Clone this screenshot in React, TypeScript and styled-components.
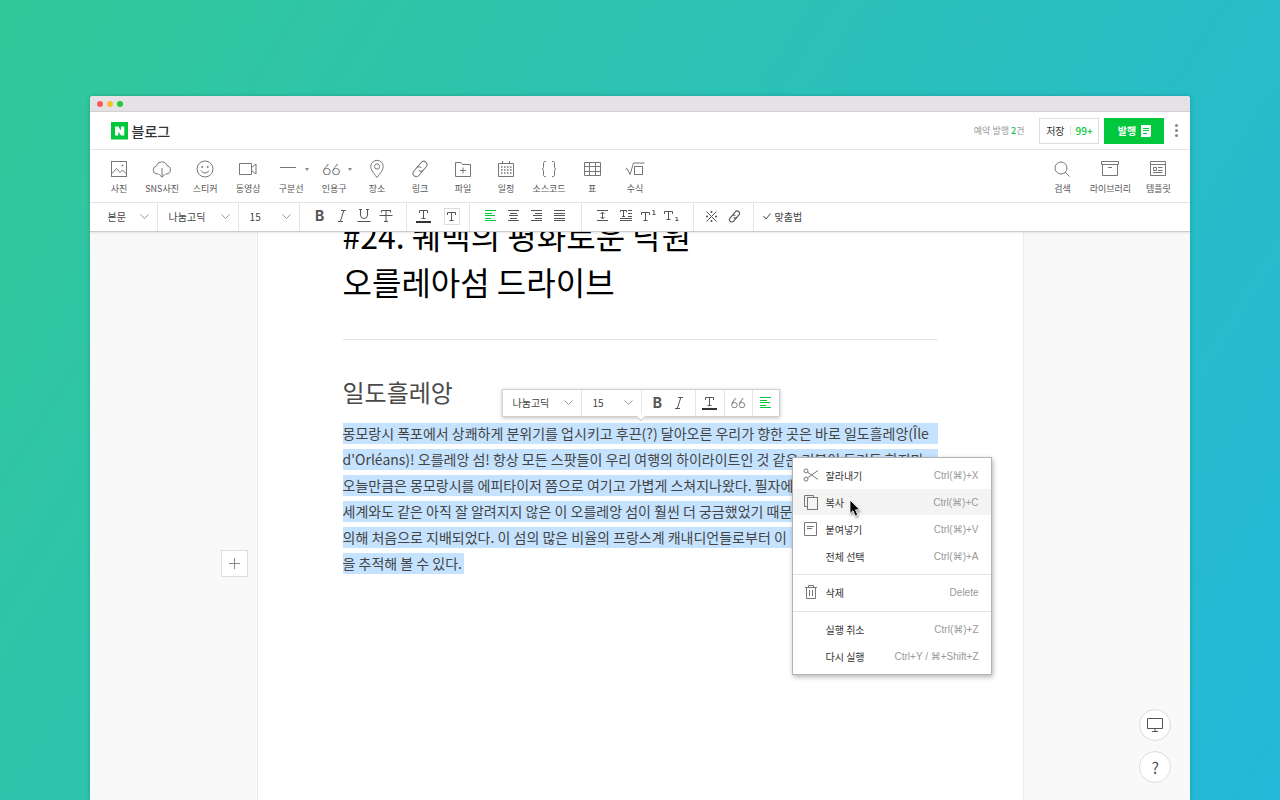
import React from "react";
import styled, { createGlobalStyle, css } from "styled-components";

const GREEN = "#00c73c";
const INK = "#555";
const LINE = "#e5e5e5";

const GlobalStyle = createGlobalStyle`
  *, *::before, *::after { box-sizing: border-box; }
  body {
    margin: 0;
    font-family: "Noto Sans CJK KR", "Noto Sans", sans-serif;
    font-size: 10px;
    color: ${INK};
  }
  button, select { font: inherit; color: inherit; }
  ul { list-style: none; margin: 0; padding: 0; }
`;

/* ---------- page frame ---------- */

const Desktop = styled.div`
  height: 100vh;
  display: flex;
  flex-direction: column;
  padding: 96px 7% 0;
  background: linear-gradient(122deg, #31c899 0%, #24b8da 100%);
  overflow: hidden;
`;

const Window = styled.div`
  position: relative;
  flex: 1;
  min-height: 0;
  display: flex;
  flex-direction: column;
  background: #fff;
  border-radius: 3px 3px 0 0;
  box-shadow: 0 0 4px rgba(0, 0, 0, 0.2);
  overflow: hidden;
`;

const TitleBar = styled.div`
  display: flex;
  align-items: center;
  gap: 4px;
  height: 16px;
  padding: 0 7px;
  background: #e5e2e6;
  border-bottom: 1px solid #d2d0d3;
`;

const Light = styled.span<{ $color: string }>`
  width: 6px;
  height: 6px;
  border-radius: 50%;
  background: ${(p) => p.$color};
`;

/* ---------- header ---------- */

const Header = styled.header`
  display: flex;
  align-items: center;
  justify-content: space-between;
  height: 38px;
  padding: 0 7px 0 21px;
  border-bottom: 1px solid ${LINE};
`;

const Brand = styled.a`
  display: flex;
  align-items: center;
  gap: 3px;
  color: #333;
  font-size: 14px;
  line-height: 18px;
  font-weight: 500;
  text-decoration: none;
`;

const HeaderActions = styled.div`
  display: flex;
  align-items: center;
`;

const Reserved = styled.span`
  margin-right: 15px;
  font-size: 9px;
  color: #999;
  b { color: ${GREEN}; font-weight: 500; }
`;

const HeaderButton = styled.button<{ $primary?: boolean }>`
  display: flex;
  align-items: center;
  justify-content: center;
  gap: 5px;
  width: 60px;
  height: 26px;
  margin-right: 5px;
  padding: 0;
  border: 1px solid #ddd;
  background: #fff;
  color: #333;
  ${(p) =>
    p.$primary &&
    css`
      border-color: ${GREEN};
      background: ${GREEN};
      color: #fff;
      font-weight: 700;
    `}
`;

const SaveCount = styled.span`
  display: flex;
  align-items: center;
  gap: 5px;
  font-weight: 500;
  color: ${GREEN};
  &::before {
    content: "";
    width: 1px;
    height: 9px;
    background: #ddd;
  }
`;

const MoreButton = styled.button`
  display: flex;
  flex-direction: column;
  align-items: center;
  justify-content: center;
  gap: 2px;
  width: 14px;
  height: 26px;
  padding: 0;
  border: 0;
  background: none;
  i {
    width: 3px;
    height: 3px;
    border-radius: 50%;
    background: #888;
  }
`;

/* ---------- insert toolbar ---------- */

const InsertBar = styled.nav`
  display: flex;
  justify-content: space-between;
  height: 53px;
  padding: 0 8px;
  border-bottom: 1px solid ${LINE};
`;

const Group = styled.div`
  display: flex;
`;

const InsertButton = styled.button<{ $wide?: boolean }>`
  display: flex;
  flex-direction: column;
  align-items: center;
  width: ${(p) => (p.$wide ? 48 : 43)}px;
  padding: 8px 0 0;
  border: 0;
  background: none;
  font-size: 9px;
  line-height: 14px;
  white-space: nowrap;
  color: #555;
`;

const IconSlot = styled.span<{ $menu?: boolean }>`
  display: flex;
  align-items: center;
  gap: 8px;
  height: 22px;
  margin-bottom: 2px;
  padding-left: ${(p) => (p.$menu ? 6 : 0)}px;
  color: #777;
`;

const Quote = styled.span<{ $small?: boolean }>`
  width: 18px;
  text-align: center;
  font-family: Lato, sans-serif;
  font-weight: 300;
  font-size: ${(p) => (p.$small ? 13 : 16)}px;
  line-height: 20px;
  color: #444;
`;

const Caret = styled.span`
  border: 2px solid transparent;
  border-top: 3px solid #888;
  border-bottom: 0;
`;

/* ---------- format toolbar ---------- */

const Segment = styled.div<{ $w: number }>`
  display: flex;
  align-items: center;
  justify-content: center;
  width: ${(p) => p.$w}px;
  border-right: 1px solid ${LINE};
  &:last-child { border-right: 0; }
`;

const SelectBox = styled.div<{ $w: number; $pad: number }>`
  position: relative;
  display: flex;
  width: ${(p) => p.$w}px;
  border-right: 1px solid ${LINE};
  select {
    flex: 1;
    min-width: 0;
    padding: 0 20px 2px ${(p) => p.$pad}px;
    border: 0;
    border-radius: 0;
    background: none;
    appearance: none;
    color: #444;
  }
  svg {
    position: absolute;
    right: 8px;
    top: 50%;
    margin-top: -3px;
    pointer-events: none;
    color: #999;
  }
`;

const Tool = styled.button<{ $w: number; $on?: boolean }>`
  display: flex;
  align-items: center;
  justify-content: center;
  width: ${(p) => p.$w}px;
  height: 24px;
  padding: 0;
  border: 0;
  background: none;
  color: ${(p) => (p.$on ? GREEN : INK)};
`;

const BoldGlyph = styled.b`
  font-family: Inter, sans-serif;
  font-size: 14px;
  line-height: 20px;
  font-weight: 700;
`;

const SpellButton = styled.button`
  display: flex;
  align-items: center;
  gap: 4px;
  padding: 0 9px 2px;
  border: 0;
  background: none;
  color: #444;
`;

const FormatBar = styled.div`
  position: relative;
  display: flex;
  height: 29px;
  border-bottom: 1px solid #ccc;
  box-shadow: 0 1px 2px rgba(0, 0, 0, 0.1);
  background: #fff;
  z-index: 1;
  ${Segment} { padding-bottom: 2px; }
`;

/* ---------- document ---------- */

const Canvas = styled.main`
  flex: 1;
  min-height: 0;
  display: flex;
  justify-content: center;
  background: #f9f9f9;
`;

const Paper = styled.article`
  position: relative;
  width: 100%;
  max-width: 767px;
  padding: 0 85px;
  background: #fff;
  border: solid #ececec;
  border-width: 0 1px;
`;

const Title = styled.h1`
  margin: -20px 0 0;
  padding-bottom: 35px;
  border-bottom: 1px solid ${LINE};
  font-size: 32px;
  line-height: 46px;
  font-weight: 400;
  color: #000;
`;

const Heading = styled.h2`
  margin: 34px 0 0;
  font-size: 24px;
  line-height: 36px;
  font-weight: 400;
  color: #4a4a4a;
`;

const Body = styled.div`
  margin-top: 13px;
  font-size: 14px;
  line-height: 21px;
  color: #444;
`;

const Line = styled.p<{ $full?: boolean }>`
  display: ${(p) => (p.$full ? "block" : "table")};
  margin: 0 0 5px;
  padding-right: 2px;
  background: #c5e3ff;
  white-space: nowrap;
`;

const AddButton = styled.button`
  position: absolute;
  left: -37px;
  top: 318px;
  display: flex;
  align-items: center;
  justify-content: center;
  width: 27px;
  height: 27px;
  padding: 0;
  border: 1px solid #ddd;
  background: #fff;
  color: #888;
`;

const FloatingBar = styled.div`
  position: absolute;
  left: 244px;
  top: 157px;
  display: flex;
  height: 28px;
  background: #fff;
  border: 1px solid #d0d0d0;
  box-shadow: 0 1px 4px rgba(0, 0, 0, 0.25);
  &::after {
    content: "";
    position: absolute;
    left: 50%;
    bottom: -4px;
    width: 6px;
    height: 6px;
    margin-left: -3px;
    background: #fff;
    border: solid #d0d0d0;
    border-width: 0 1px 1px 0;
    transform: rotate(45deg);
  }
`;

/* ---------- context menu ---------- */

const Menu = styled.div`
  position: absolute;
  left: 534px;
  top: 225px;
  width: 200px;
  background: #fff;
  border: 1px solid #b4b4b4;
  box-shadow: 1px 2px 5px rgba(0, 0, 0, 0.3);
`;

const MenuGroup = styled.ul`
  display: flex;
  flex-direction: column;
  gap: 1px;
  padding: 4px 0 5px;
  & + & {
    padding: 4px 0 6px;
    border-top: 1px solid ${LINE};
  }
  & + &:last-child { padding-bottom: 5px; }
`;

const MenuItem = styled.button<{ $hover?: boolean }>`
  display: grid;
  grid-template-columns: 16px 1fr auto;
  column-gap: 7px;
  align-items: center;
  width: 100%;
  height: 26px;
  padding: 0 12px 0 10px;
  border: 0;
  background: ${(p) => (p.$hover ? "#f4f4f4" : "none")};
  text-align: left;
  white-space: nowrap;
  color: #333;
  svg { justify-self: center; color: #777; }
  kbd {
    font-family: "Liberation Sans", "DejaVu Sans", sans-serif;
    font-size: 10px;
    color: #999;
  }
`;

const Pointer = styled.svg`
  position: absolute;
  left: 591px;
  top: 267px;
  filter: drop-shadow(1px 2px 1px rgba(0, 0, 0, 0.35));
`;

const Helpers = styled.div`
  position: absolute;
  right: 19px;
  bottom: 17px;
  display: flex;
  flex-direction: column;
  gap: 10px;
`;

const RoundButton = styled.button`
  display: flex;
  align-items: center;
  justify-content: center;
  width: 32px;
  height: 32px;
  padding: 0;
  border: 1px solid #ddd;
  border-radius: 50%;
  background: #fff;
  color: #555;
  font-size: 16px;
`;

/* ---------- icons ---------- */

type SvgProps = { w: number; h: number; children: React.ReactNode; sw?: number };
const Svg = ({ w, h, children, sw = 1 }: SvgProps) => (
  <svg width={w} height={h} viewBox={`0 0 ${w} ${h}`} fill="none" stroke="currentColor" strokeWidth={sw} aria-hidden="true">
    {children}
  </svg>
);

const Chevron = () => (
  <Svg w={9} h={5}><path d="M.5.5l4 4 4-4" /></Svg>
);

/* two interlocked capsules, tilted */
const LinkShape = () => (
  <g transform="rotate(-50 9 9)">
    <path d="M10.500 12.300H3.300a3.300 3.300 0 0 1 0-6.600h4.200a3.300 3.300 0 0 1 3.300 3.300" />
    <path d="M7.500 5.700h7.200a3.300 3.300 0 0 1 0 6.600h-4.200A3.300 3.300 0 0 1 7.200 9" />
  </g>
);

const icons = {
  photo: <Svg w={18} h={18}><rect x="1.500" y="1.500" width="15" height="15" /><path d="M2 13.500l4.500-5 3.500 4 2.500-2.500 4 4" /><circle cx="12.500" cy="5.500" r=".6" /></Svg>,
  cloud: <Svg w={20} h={18}><path d="M6.500 14H5a4 4 0 0 1-.6-7.900A5.500 5.500 0 0 1 15 5.700 4.200 4.200 0 0 1 15 14h-1.500M10 8v9M7 14.200l3 3 3-3" /></Svg>,
  smile: <Svg w={18} h={18}><circle cx="9" cy="9" r="8" /><path d="M5 10.500c1.500 3.200 6.500 3.200 8 0" /><circle cx="6.300" cy="7" r=".6" fill="currentColor" /><circle cx="11.700" cy="7" r=".6" fill="currentColor" /></Svg>,
  video: <Svg w={20} h={18}><path d="M1.500 3.500h12v11h-12zM13.500 7.500l4.500-3.500v10l-4.500-3.500" /></Svg>,
  rule: <Svg w={18} h={18}><path d="M1 7.500h16" /></Svg>,
  place: <Svg w={18} h={20}><path d="M9 18.500C5 13.500 2.800 10.600 2.800 7.500a6.200 6.200 0 0 1 12.400 0c0 3.100-2.200 6-6.200 11z" /><circle cx="9" cy="7.500" r="2.600" /></Svg>,
  link: <Svg w={18} h={18}><LinkShape /></Svg>,
  file: <Svg w={18} h={18}><path d="M1.500 16.500v-14h5.500l1.500 2h8v12zM9 7.500v6M6 10.500h6" /></Svg>,
  calendar: <Svg w={18} h={18}><path d="M1.500 3.500h15v13h-15zM5.500 1v3M12.500 1v3" /><path d="M4 7h11M4 10h11M4 13h11" strokeWidth="1.500" strokeDasharray="1.500 1.500" /></Svg>,
  code: <Svg w={18} h={18}><path d="M6 1.500H5c-1.200 0-1.500.7-1.500 1.700V7c0 1-.5 2-1.500 2 1 0 1.500 1 1.500 2v3.800c0 1 .3 1.700 1.500 1.700h1M12 1.500h1c1.200 0 1.500.7 1.500 1.700V7c0 1 .5 2 1.500 2-1 0-1.500 1-1.500 2v3.800c0 1-.3 1.700-1.500 1.700h-1" /></Svg>,
  table: <Svg w={18} h={18}><path d="M1.500 2.500h16v13h-16zM1.500 6.500h16M1.500 11.500h16M6.500 2.500v13M12.500 2.500v13" /></Svg>,
  formula: <Svg w={20} h={18}><path d="M.5 9.500l1.500-1 3 6 3.500-11.500h11" /><rect x="9.500" y="6.500" width="8" height="8" /></Svg>,
  search: <Svg w={18} h={18}><circle cx="8" cy="8" r="6" /><path d="M12.300 12.300l4.200 4.200" /></Svg>,
  library: <Svg w={18} h={18}><path d="M.5 1.500h17v3h-17zM1.500 4.500v11h15v-11M7 7.500h4" /></Svg>,
  template: <Svg w={18} h={18}><path d="M1.500 1.500h15v14h-15zM1.500 4.500h15M4.500 7.500h3v3h-3zM9 7.500h4.500M9 10.500h4.500M4 12.500h9.500" /></Svg>,
};

/* slab-serif letter form used by the character tools */
const SlabT = ({ x = 0, y = 0 }: { x?: number; y?: number }) => (
  <path transform={`translate(${x} ${y})`} d="M.5 3V.5h8V3M4.500.5v8M2.500 8.500h4" />
);

const tool = {
  italic: <Svg w={12} h={14}><path d="M5 1.500h5M2 12.500h5M7.800 1.500l-3.500 11" /></Svg>,
  underline: <Svg w={14} h={14}><path d="M3.500.500v5.500a3.500 3.500 0 0 0 7 0V.5M2 .5h3M9 .5h3M.5 12.500h13" /></Svg>,
  strike: <Svg w={14} h={14}><path d="M2.500 3.500v-2h9v2M7 1.500v11M5 12.500h4M.5 6.500h13" /></Svg>,
  color: <Svg w={15} h={14}><SlabT x={3} y={1} /><path d="M0 13h15" stroke="#333" strokeWidth="2" /></Svg>,
  boxed: <Svg w={16} h={17}><rect x=".5" y=".5" width="15" height="16" stroke="#ddd" /><SlabT x={3} y={4} /></Svg>,
  left: <Svg w={12} h={12}><path d="M0 .5h11M0 3.500h7M0 5.500h10M0 8.500h6M0 10.500h11" /></Svg>,
  center: <Svg w={12} h={12}><path d="M0 .5h11M2 3.500h7M1 5.500h9M2 8.500h7M0 10.500h11" /></Svg>,
  right: <Svg w={12} h={12}><path d="M0 .5h11M4 3.500h7M2 5.500h9M4 8.500h7M0 10.500h11" /></Svg>,
  justify: <Svg w={12} h={12}><path d="M0 .5h11M0 3.500h11M0 5.500h11M0 8.500h11M0 10.500h11" /></Svg>,
  height: <Svg w={12} h={12}><path d="M0 .5h11M0 10.500h11M5.500 2.500v6M3.500 4l2-2 2 2M3.500 7l2 2 2-2" /></Svg>,
  indent: <Svg w={12} h={12}><path d="M.5 2V.5h6V2M3.500.5v6M2 6.500h3M8 .5h4M8 3.500h4M8 6.500h4M0 8.500h12M0 10.500h12" /></Svg>,
  sup: <Svg w={15} h={12}><SlabT y={2} /><path d="M11.500.5h1.500v4M11.500 4.500h3" /></Svg>,
  sub: <Svg w={15} h={12}><SlabT y={1} /><path d="M11.500 7.500h1.500v3M11.500 10.500h3" /></Svg>,
  special: <Svg w={13} h={13}><path d="M1.500 1.500l10 10M11.500 1.500l-10 10" /><path d="M6.500 1v2M6.500 10v2M1 6.500h2M10 6.500h2" strokeWidth="1.600" /></Svg>,
  link: <svg width="13" height="13" viewBox="0 0 18 18" fill="none" stroke="currentColor" strokeWidth="1.500" aria-hidden="true"><LinkShape /></svg>,
};

const menuIcons = {
  cut: <Svg w={16} h={14}><circle cx="3" cy="2.900" r="2" /><circle cx="3" cy="11.100" r="2" /><path d="M4.600 4.200L15 11.500M4.600 9.800L15 2.500" /></Svg>,
  copy: <Svg w={14} h={15}><path d="M3.500 11.500h-3V.5h9v2" /><rect x="3.500" y="2.500" width="10" height="12" /></Svg>,
  paste: <Svg w={13} h={14}><path d="M.5.5h12v13H.5zM3 4.500h7M3 6.500h5" /></Svg>,
  trash: <Svg w={12} h={14}><path d="M1.500 2.500v11h9v-11M0 2.500h12M3.500 2.500v-2h5v2M4.500 5v6M7.500 5v6" /></Svg>,
};

/* ---------- data ---------- */

type Insert = { label: string; icon: React.ReactNode; menu?: boolean };
const inserts: Insert[] = [
  { label: "사진", icon: icons.photo },
  { label: "SNS사진", icon: icons.cloud },
  { label: "스티커", icon: icons.smile },
  { label: "동영상", icon: icons.video },
  { label: "구분선", icon: icons.rule, menu: true },
  { label: "인용구", icon: <Quote>66</Quote>, menu: true },
  { label: "장소", icon: icons.place },
  { label: "링크", icon: icons.link },
  { label: "파일", icon: icons.file },
  { label: "일정", icon: icons.calendar },
  { label: "소스코드", icon: icons.code },
  { label: "표", icon: icons.table },
  { label: "수식", icon: icons.formula },
];
const utilities: Insert[] = [
  { label: "검색", icon: icons.search },
  { label: "라이브러리", icon: icons.library },
  { label: "템플릿", icon: icons.template },
];

const lines = [
  "몽모랑시 폭포에서 상쾌하게 분위기를 업시키고 후끈(?) 달아오른 우리가 향한 곳은 바로 일도흘레앙(Île",
  "d'Orléans)! 오를레앙 섬! 항상 모든 스팟들이 우리 여행의 하이라이트인 것 같은 기분이 들기도 하지만,",
  "오늘만큼은 몽모랑시를 에피타이저 쯤으로 여기고 가볍게 스쳐지나왔다. 필자에",
  "세계와도 같은 아직 잘 알려지지 않은 이 오를레앙 섬이 훨씬 더 궁금했었기 때문",
  "의해 처음으로 지배되었다. 이 섬의 많은 비율의 프랑스계 캐내디언들로부터 이",
  "을 추적해 볼 수 있다.",
];

type Entry = { label: string; keys: string; icon?: React.ReactNode; hover?: boolean };
const menu: Entry[][] = [
  [
    { label: "잘라내기", keys: "Ctrl(⌘)+X", icon: menuIcons.cut },
    { label: "복사", keys: "Ctrl(⌘)+C", icon: menuIcons.copy, hover: true },
    { label: "붙여넣기", keys: "Ctrl(⌘)+V", icon: menuIcons.paste },
    { label: "전체 선택", keys: "Ctrl(⌘)+A" },
  ],
  [{ label: "삭제", keys: "Delete", icon: menuIcons.trash }],
  [
    { label: "실행 취소", keys: "Ctrl(⌘)+Z" },
    { label: "다시 실행", keys: "Ctrl+Y / ⌘+Shift+Z" },
  ],
];

/* ---------- parts ---------- */

const Picker = ({ label, value, w, pad }: { label: string; value: string; w: number; pad: number }) => (
  <SelectBox $w={w} $pad={pad}>
    <select aria-label={label} defaultValue={value}>
      <option>{value}</option>
    </select>
    <Chevron />
  </SelectBox>
);

const InsertItem = ({ item, wide }: { item: Insert; wide?: boolean }) => (
  <InsertButton $wide={wide}>
    <IconSlot $menu={item.menu}>
      {item.icon}
      {item.menu && <Caret />}
    </IconSlot>
    {item.label}
  </InsertButton>
);

type ToolDef = [name: string, glyph: React.ReactNode, on?: boolean];
const Tools = ({ w, size, items }: { w: number; size: number; items: ToolDef[] }) => (
  <Segment $w={w}>
    {items.map(([name, glyph, on]) => (
      <Tool key={name} $w={size} $on={on} aria-label={name}>{glyph}</Tool>
    ))}
  </Segment>
);

export default function App() {
  return (
    <>
      <GlobalStyle />
      <Desktop>
        <Window>
          <TitleBar>
            <Light $color="#fc5b57" />
            <Light $color="#fdbc2e" />
            <Light $color="#27c840" />
          </TitleBar>

          <Header>
            <Brand href="#">
              <svg width="18" height="18" viewBox="0 0 18 18" aria-hidden="true">
                <rect width="17" height="17.500" fill={GREEN} />
                <path d="M4 4.500h3.300l2.700 4v-4h3.300v9H10l-2.700-4v4H4z" fill="#fff" />
              </svg>
              블로그
            </Brand>
            <HeaderActions>
              <Reserved>예약 발행 <b>2</b>건</Reserved>
              <HeaderButton>저장<SaveCount>99+</SaveCount></HeaderButton>
              <HeaderButton $primary>
                발행
                <svg width="10" height="12" viewBox="0 0 10 12" aria-hidden="true">
                  <path d="M0 0h10v11L9 12H0z" fill="#fff" />
                  <path d="M2 3.500h6M2 5.500h6M2 8.500h4" stroke={GREEN} />
                </svg>
              </HeaderButton>
              <MoreButton aria-label="더보기"><i /><i /><i /></MoreButton>
            </HeaderActions>
          </Header>

          <InsertBar>
            <Group>{inserts.map((i) => <InsertItem key={i.label} item={i} />)}</Group>
            <Group>{utilities.map((i) => <InsertItem key={i.label} item={i} wide />)}</Group>
          </InsertBar>

          <FormatBar>
            <Picker label="문단 서식" value="본문" w={68} pad={18} />
            <Picker label="글꼴" value="나눔고딕" w={81} pad={11} />
            <Picker label="글자 크기" value="15" w={61} pad={11} />
            <Tools w={107} size={22} items={[["굵게", <BoldGlyph>B</BoldGlyph>], ["기울임", tool.italic], ["밑줄", tool.underline], ["취소선", tool.strike]]} />
            <Tools w={63} size={28} items={[["글자색", tool.color], ["배경색", tool.boxed]]} />
            <Tools w={112} size={23} items={[["왼쪽 정렬", tool.left, true], ["가운데 정렬", tool.center], ["오른쪽 정렬", tool.right], ["양쪽 정렬", tool.justify]]} />
            <Tools w={112} size={23} items={[["줄 간격", tool.height], ["머리글자", tool.indent], ["위 첨자", tool.sup], ["아래 첨자", tool.sub]]} />
            <Tools w={60} size={23} items={[["특수문자", tool.special], ["링크", tool.link]]} />
            <SpellButton>
              <Svg w={8} h={7}><path d="M.5 3l2.500 3L7.500.5" /></Svg>
              맞춤법
            </SpellButton>
          </FormatBar>

          <Canvas>
            <Paper>
              <Title>#24. 퀘백의 평화로운 낙원<br />오를레아섬 드라이브</Title>
              <Heading>일도흘레앙</Heading>
              <Body>
                {lines.map((text, i) => <Line key={text} $full={i < lines.length - 1}>{text}</Line>)}
              </Body>

              <AddButton aria-label="추가"><Svg w={11} h={11}><path d="M5.500 0v11M0 5.500h11" /></Svg></AddButton>

              <FloatingBar>
                <Picker label="글꼴" value="나눔고딕" w={79} pad={10} />
                <Picker label="글자 크기" value="15" w={60} pad={11} />
                <Tools w={54} size={21} items={[["굵게", <BoldGlyph>B</BoldGlyph>], ["기울임", tool.italic]]} />
                <Tools w={29} size={26} items={[["글자색", tool.color]]} />
                <Tools w={28} size={26} items={[["인용구", <Quote $small>66</Quote>]]} />
                <Tools w={26} size={26} items={[["왼쪽 정렬", tool.left, true]]} />
              </FloatingBar>

              <Menu>
                {menu.map((group, i) => (
                  <MenuGroup key={i}>
                    {group.map((m) => (
                      <li key={m.label}>
                        <MenuItem $hover={m.hover}>
                          {m.icon ?? <span />}
                          <span>{m.label}</span>
                          <kbd>{m.keys}</kbd>
                        </MenuItem>
                      </li>
                    ))}
                  </MenuGroup>
                ))}
              </Menu>
              <Pointer width="13" height="20" viewBox="0 0 13 20" aria-hidden="true">
                <path d="M1 1v13.500l3-2.800 2.200 5.300 2.500-1-2.200-5.200h4.200z" fill="#000" stroke="#fff" strokeWidth=".8" />
              </Pointer>
            </Paper>
          </Canvas>

          <Helpers>
            <RoundButton aria-label="미리보기">
              <Svg w={18} h={16}><path d="M1.500 1.500h15v10h-15zM9 11.500v3M6 14.500h6" /></Svg>
            </RoundButton>
            <RoundButton>?</RoundButton>
          </Helpers>
        </Window>
      </Desktop>
    </>
  );
}
